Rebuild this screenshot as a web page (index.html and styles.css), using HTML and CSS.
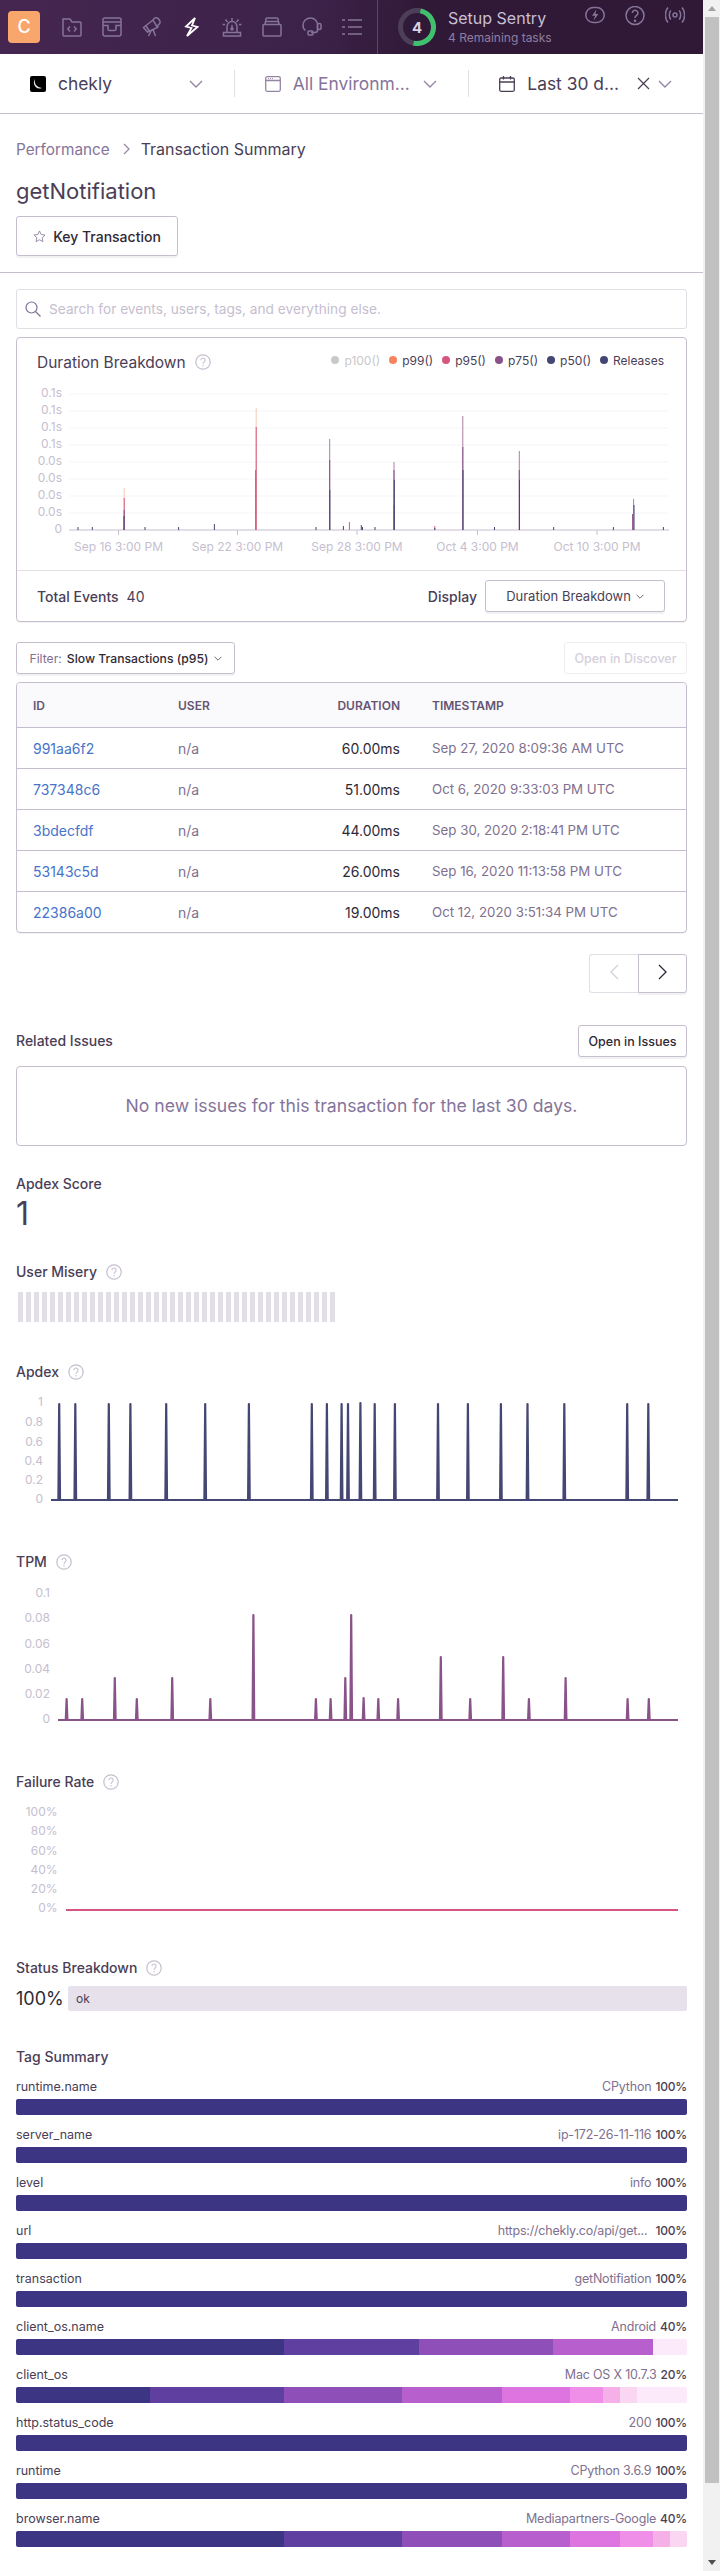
FILE: index.html
```html
<!DOCTYPE html>
<html>
<head>
  <meta charset="UTF-8">
  <title>getNotifiation - Transaction Summary</title>
  <link rel="stylesheet" href="styles.css">
</head>
<body>
  <svg class="defs" width="0" height="0">
    <symbol id="help" viewBox="0 0 16 16">
      <circle cx="8" cy="8" r="7.2" fill="none" stroke="currentColor" stroke-width="1.2"/>
      <path d="M5.9 6.2a2.1 2.1 0 1 1 3.3 1.7c-.8.6-1.2 1-1.2 2" fill="none" stroke="currentColor" stroke-width="1.1"/>
      <circle cx="8" cy="11.8" r=".7" fill="currentColor"/>
    </symbol>
    <symbol id="chevron" viewBox="0 0 14 8">
      <path d="M1 1l6 6 6-6" fill="none" stroke="currentColor" stroke-width="1.4"/>
    </symbol>
  </svg>

  <div class="page">
    <nav class="topnav">
      <div class="org-avatar">C</div>
      <svg class="nav-icon" viewBox="0 0 20 20"><path d="M1 2h7l2 3h8a1 1 0 0 1 1 1v12a1 1 0 0 1-1 1H2a1 1 0 0 1-1-1V2z"/><path d="M8 9.5L5.8 12 8 14.500M12 9.500l2.200 2.500-2.200 2.500"/></svg>
      <svg class="nav-icon" viewBox="0 0 20 20"><rect x="1" y="1" width="18" height="18" rx="2"/><path d="M1 5h18M1 8.500h5V12q0 1.500 1.500 1.500h5Q14 13.500 14 12V8.500h5"/></svg>
      <svg class="nav-icon" viewBox="0 0 20 20"><path d="M1.500 10.500L11 3l4.500 7.500-10 4.500zM4 9l3 4.500M11 3a3.200 3.200 0 0 1 5-1.500c2.500 1.500 3 5 .2 6.500l-.7 2.500M9.500 13l-3 6M11 12.500l2.500 6.500"/></svg>
      <svg class="nav-icon bolt" viewBox="0 0 20 20"><path d="M13 1L4 9.500l5.500 1.500L5 19l10.500-9-5.500-1.500z"/></svg>
      <svg class="nav-icon" viewBox="0 0 20 20"><path d="M5 15V9.500a5 5 0 0 1 10 0V15M1.500 15.500h17V19h-17zM10 1v3M3.500 2.500l2 2.500M16.500 2.500l-2 2.500M.5 7.500h2.500M17 7.500h2.500M10 8v3"/><circle cx="10" cy="12" r="1"/></svg>
      <svg class="nav-icon" viewBox="0 0 20 20"><path d="M1 8.500a1 1 0 0 1 1-1h16a1 1 0 0 1 1 1V18a1 1 0 0 1-1 1H2a1 1 0 0 1-1-1zM3 7.500L4 2a1 1 0 0 1 1-1h10a1 1 0 0 1 1 1l1 5.500M3.500 4.500h13"/></svg>
      <svg class="nav-icon" viewBox="0 0 20 20"><path d="M3.500 13.500C2 12.500 1 11 1 8.500 1 4 4.500 1 8.500 1s7 3 7 7v5c0 1.500-1 2.500-2.500 2.500H9"/><rect x="6" y="14" width="5" height="4" rx="1"/><rect x="15.500" y="6.500" width="3.500" height="6" rx="1.500"/></svg>
      <svg class="nav-icon list" viewBox="0 0 20 20"><path d="M0 3h3M6 3h14M0 10h3M6 10h14M0 17h3M6 17h14"/></svg>

      <div class="setup">
        <svg class="ring" viewBox="0 0 38 38">
          <circle cx="19" cy="19" r="16.500" fill="none" stroke="#4d3f58" stroke-width="5"/>
          <path d="M19 2.500a16.500 16.500 0 0 1 0 33" fill="none" stroke="#3fc16d" stroke-width="5" transform="rotate(12 19 19)"/>
          <text x="19" y="24.500" text-anchor="middle" class="ring-count">4</text>
        </svg>
        <div class="setup-text">
          <div class="setup-title">Setup Sentry</div>
          <div class="setup-sub">4 Remaining tasks</div>
        </div>
      </div>

      <div class="nav-right">
        <svg class="nav-icon" viewBox="0 0 20 20"><rect x=".8" y="1.500" width="18.400" height="15" rx="7.500"/><path d="M11.500 3.500L7 9.800h3l-1.500 4.700 5-6.500h-3z" fill="currentColor" stroke="none"/></svg>
        <svg class="nav-icon" viewBox="0 0 20 20"><circle cx="10" cy="9.500" r="9"/><path d="M7.300 7a2.800 2.800 0 1 1 4.300 2.400c-1 .7-1.600 1.300-1.600 2.600"/><circle cx="10" cy="14.800" r=".6"/></svg>
        <svg class="nav-icon" viewBox="0 0 20 20"><circle cx="10" cy="9" r="2"/><path d="M5.800 4.500c-2 2.300-2 6.700 0 9M14.200 4.500c2 2.300 2 6.700 0 9M3 1.500c-3.500 4-3.500 11 0 15M17 1.500c3.500 4 3.500 11 0 15"/></svg>
      </div>
    </nav>

    <div class="global-bar">
      <div class="selector">
        <svg class="project-icon" viewBox="0 0 16 16">
          <rect width="16" height="16" rx="2" fill="#000"/>
          <path d="M5 3c-1 4 1 8 7 9-4 1.500-7-.5-8-4-.3-2 0-4 1-5z" fill="#e6e6e6"/>
        </svg>
        <span class="selector-name name-dark">chekly</span>
        <svg class="chevron"><use href="#chevron"/></svg>
      </div>
      <div class="selector">
        <svg class="bar-icon" viewBox="0 0 16 16"><rect x=".7" y=".7" width="14.600" height="14.600" rx="1.500"/><path d="M.7 4.500h14.600M3 2.600h.8M5 2.600h.8M7 2.600h.8"/></svg>
        <span class="selector-name name-muted">All Environm...</span>
        <svg class="chevron"><use href="#chevron"/></svg>
      </div>
      <div class="selector">
        <svg class="bar-icon cal" viewBox="0 0 16 16"><rect x=".7" y="2" width="14.600" height="13.300" rx="1.500"/><path d="M.7 6h14.600M4.500 0v3.500M11.500 0v3.500"/></svg>
        <span class="selector-name name-dark">Last 30 d...</span>
        <svg class="close" viewBox="0 0 13 13"><path d="M1 1l11 11M12 1L1 12"/></svg>
        <svg class="chevron"><use href="#chevron"/></svg>
      </div>
    </div>

    <header class="page-head">
      <div class="crumbs">
        <span class="crumb-link">Performance</span>
        <svg class="crumb-sep" viewBox="0 0 7 12"><path d="M1 1l5 5-5 5"/></svg>
        <span>Transaction Summary</span>
      </div>
      <h1 class="page-title">getNotifiation</h1>
      <button class="btn btn-key">
        <svg class="star" viewBox="0 0 14 14"><path d="M7 1l1.800 3.900 4.200.5-3.100 2.900.8 4.200L7 10.500l-3.700 2 .8-4.200L1 5.400l4.200-.5z"/></svg>
        Key Transaction
      </button>
    </header>

    <main class="content">
      <div class="search">
        <svg class="search-icon" viewBox="0 0 16 16"><circle cx="6.500" cy="6.500" r="5.500"/><path d="M10.500 10.500l5 5"/></svg>
        <span>Search for events, users, tags, and everything else.</span>
      </div>

      <section class="panel">
        <div class="panel-head">
          <span class="panel-title">Duration Breakdown</span>
          <svg class="help panel-help"><use href="#help"/></svg>
          <ul class="legend">
            <li class="legend-off"><i class="dot dot-grey"></i>p100()</li>
            <li><i class="dot dot-orange"></i>p99()</li>
            <li><i class="dot dot-pink"></i>p95()</li>
            <li><i class="dot dot-purple"></i>p75()</li>
            <li><i class="dot dot-navy"></i>p50()</li>
            <li><i class="dot dot-navy"></i>Releases</li>
          </ul>
        </div>
        <svg class="chart chart-duration" viewBox="17 380 669 190">
          <path class="grid" d="M69 394H668M69 411H668M69 428H668M69 445H668M69 462H668M69 479H668M69 496H668M69 513H668"/>
          <path class="axis" d="M69 530H669M118.500 530v5M237.500 530v5M357 530v5M477.500 530v5M597 530v5"/>
          <g class="axis-y">
            <text x="62" y="397">0.1s</text>
            <text x="62" y="414">0.1s</text>
            <text x="62" y="431">0.1s</text>
            <text x="62" y="448">0.1s</text>
            <text x="62" y="465">0.0s</text>
            <text x="62" y="482">0.0s</text>
            <text x="62" y="499">0.0s</text>
            <text x="62" y="516">0.0s</text>
            <text x="62" y="533">0</text>
          </g>
          <g class="axis-x">
            <text x="118.500" y="551">Sep 16 3:00 PM</text>
            <text x="237.500" y="551">Sep 22 3:00 PM</text>
            <text x="357" y="551">Sep 28 3:00 PM</text>
            <text x="477.500" y="551">Oct 4 3:00 PM</text>
            <text x="597" y="551">Oct 10 3:00 PM</text>
          </g>
          <path class="bar-peach" d="M124.200 488V530M256.200 408V530"/>
          <path class="bar-pink" d="M124.200 498V530M256.200 427V530M255.600 470V530M349.400 522V530M434.800 526V530"/>
          <path class="bar-mauve" d="M329.700 439V530M462.800 416V530M519.300 451V530M394 462V530M633.600 499V530"/>
          <path class="bar-purple" d="M124.200 510V530M329.700 460V530M462.800 447V530M394 470V530M519.300 470V530M632.600 514V530M394 505V530"/>
          <path class="bar-navy" d="M78 527V530M92.300 527V530M124 516V530M145 527V530M178.600 527V530M214.400 524V530M316 527V530M329.800 490V530M343.400 526V530M361.300 525V530M362.500 527V530M375 527V530M394.300 480V530M434.800 528V530M463 470V530M494.500 527V530M519.500 480V530M553.700 527V530M613.400 527V530M634 505V530M663.400 527V530"/>
        </svg>
        <div class="panel-foot">
          <span class="foot-label">Total Events</span>
          <span class="foot-value">40</span>
          <span class="foot-label foot-display">Display</span>
          <button class="btn btn-display">Duration Breakdown <svg class="mini-chevron"><use href="#chevron"/></svg></button>
        </div>
      </section>

      <div class="table-actions">
        <button class="btn btn-filter"><span class="filter-label">Filter:</span> Slow Transactions (p95) <svg class="mini-chevron"><use href="#chevron"/></svg></button>
        <button class="btn btn-disabled">Open in Discover</button>
      </div>

      <table class="events">
        <colgroup><col class="col-id"><col class="col-user"><col class="col-duration"><col></colgroup>
        <thead>
          <tr><th>ID</th><th>User</th><th class="num">Duration</th><th>Timestamp</th></tr>
        </thead>
        <tbody>
          <tr><td class="link">991aa6f2</td><td class="muted">n/a</td><td class="num">60.00ms</td><td class="stamp">Sep 27, 2020 8:09:36 AM UTC</td></tr>
          <tr><td class="link">737348c6</td><td class="muted">n/a</td><td class="num">51.00ms</td><td class="stamp">Oct 6, 2020 9:33:03 PM UTC</td></tr>
          <tr><td class="link">3bdecfdf</td><td class="muted">n/a</td><td class="num">44.00ms</td><td class="stamp">Sep 30, 2020 2:18:41 PM UTC</td></tr>
          <tr><td class="link">53143c5d</td><td class="muted">n/a</td><td class="num">26.00ms</td><td class="stamp">Sep 16, 2020 11:13:58 PM UTC</td></tr>
          <tr><td class="link">22386a00</td><td class="muted">n/a</td><td class="num">19.00ms</td><td class="stamp">Oct 12, 2020 3:51:34 PM UTC</td></tr>
        </tbody>
      </table>

      <div class="pager">
        <button class="pager-btn pager-off"><svg viewBox="0 0 9 16"><path d="M8 1L1 8l7 7"/></svg></button>
        <button class="pager-btn"><svg viewBox="0 0 9 16"><path d="M1 1l7 7-7 7"/></svg></button>
      </div>

      <div class="related-head">
        <h3 class="section-title">Related Issues</h3>
        <button class="btn btn-issues">Open in Issues</button>
      </div>
      <div class="empty-box">No new issues for this transaction for the last 30 days.</div>

      <h3 class="section-title apdex-title">Apdex Score</h3>
      <div class="big-number">1</div>

      <h3 class="section-title misery-title">User Misery <svg class="help"><use href="#help"/></svg></h3>
      <div class="misery-bars"></div>

      <h3 class="section-title apdex-chart-title">Apdex <svg class="help"><use href="#help"/></svg></h3>
      <svg class="chart chart-apdex" viewBox="16 1390 671 120">
        <g class="axis-y">
          <text x="43" y="1406">1</text>
          <text x="43" y="1426">0.8</text>
          <text x="43" y="1446">0.6</text>
          <text x="43" y="1465">0.4</text>
          <text x="43" y="1484">0.2</text>
          <text x="43" y="1503">0</text>
        </g>
        <path class="line-navy" d="M51 1500H58.400l.8-96 .8 96H74.500l.8-96 .8 96H108l.8-96 .8 96H129.600l.8-96 .8 96H165.400l.8-96 .8 96H204.400l.8-96 .8 96H248.100l.8-96 .8 96H311l.8-96 .8 96H326.100l.8-96 .8 96H340.800l.8-96 .8 96H347.200l.8-96 .8 96H359.600l.8-97 .8 97H373.900l.8-96 .8 96H394.100l.8-96 .8 96H437.200l.8-96 .8 96H467.100l.8-96 .8 96H500.100l.8-96 .8 96H526.700l.8-96 .8 96H563.500l.8-96 .8 96H626.400l.8-96 .8 96H647.500l.8-96 .8 96H678"/>
      </svg>

      <h3 class="section-title chart-title">TPM <svg class="help"><use href="#help"/></svg></h3>
      <svg class="chart chart-tpm" viewBox="16 1580 671 150">
        <g class="axis-y">
          <text x="50" y="1597">0.1</text>
          <text x="50" y="1622">0.08</text>
          <text x="50" y="1648">0.06</text>
          <text x="50" y="1673">0.04</text>
          <text x="50" y="1698">0.02</text>
          <text x="50" y="1723">0</text>
        </g>
        <path class="line-purple" d="M58 1720H65.800l.8-21 .8 21H81.400l.8-21 .8 21H114l.8-42 .8 42H136l.8-21 .8 21H171.400l.8-42 .8 42H209.500l.8-21 .8 21H252.600l.8-105 .8 105H315.100l.8-21 .8 21H329.800l.8-21 .8 21H344.500l.8-42 .8 42H350.400l.8-105 .8 105H362.800l.8-22 .8 22H377.500l.8-21 .8 21H397.300l.8-21 .8 21H440l.8-63 .8 63H469.400l.8-21 .8 21H502.400l.8-63 .8 63H528.100l.8-21 .8 21H564.800l.8-42 .8 42H626.800l.8-21 .8 21H648l.8-21 .8 21H678"/>
      </svg>

      <h3 class="section-title chart-title">Failure Rate <svg class="help"><use href="#help"/></svg></h3>
      <svg class="chart chart-failure" viewBox="16 1800 671 120">
        <g class="axis-y">
          <text x="57.500" y="1816">100%</text>
          <text x="57.500" y="1835">80%</text>
          <text x="57.500" y="1855">60%</text>
          <text x="57.500" y="1874">40%</text>
          <text x="57.500" y="1893">20%</text>
          <text x="57.500" y="1912">0%</text>
        </g>
        <path class="line-pink" d="M66 1910H678"/>
      </svg>

      <h3 class="section-title status-title">Status Breakdown <svg class="help"><use href="#help"/></svg></h3>
      <div class="status-row">
        <span class="status-pct">100%</span>
        <div class="status-bar">ok</div>
      </div>

      <h3 class="section-title tags-title">Tag Summary</h3>
      <div class="tag">
        <div class="tag-head"><span class="tag-name">runtime.name</span><span class="tag-value">CPython</span><span class="tag-pct">100%</span></div>
        <div class="tag-bar"><i class="seg seg-1 seg-full"></i></div>
      </div>
      <div class="tag">
        <div class="tag-head"><span class="tag-name">server_name</span><span class="tag-value">ip-172-26-11-116</span><span class="tag-pct">100%</span></div>
        <div class="tag-bar"><i class="seg seg-1 seg-full"></i></div>
      </div>
      <div class="tag">
        <div class="tag-head"><span class="tag-name">level</span><span class="tag-value">info</span><span class="tag-pct">100%</span></div>
        <div class="tag-bar"><i class="seg seg-1 seg-full"></i></div>
      </div>
      <div class="tag">
        <div class="tag-head"><span class="tag-name">url</span><span class="tag-value tag-url">https://chekly.co/api/get...</span><span class="tag-pct">100%</span></div>
        <div class="tag-bar"><i class="seg seg-1 seg-full"></i></div>
      </div>
      <div class="tag">
        <div class="tag-head"><span class="tag-name">transaction</span><span class="tag-value">getNotifiation</span><span class="tag-pct">100%</span></div>
        <div class="tag-bar"><i class="seg seg-1 seg-full"></i></div>
      </div>
      <div class="tag">
        <div class="tag-head"><span class="tag-name">client_os.name</span><span class="tag-value">Android</span><span class="tag-pct">40%</span></div>
        <div class="tag-bar">
          <i class="seg seg-1" style="width:40%"></i><i class="seg seg-2" style="width:20%"></i><i class="seg seg-3" style="width:20%"></i><i class="seg seg-4" style="width:15%"></i><i class="seg seg-9" style="width:5%"></i>
        </div>
      </div>
      <div class="tag">
        <div class="tag-head"><span class="tag-name">client_os</span><span class="tag-value">Mac OS X 10.7.3</span><span class="tag-pct">20%</span></div>
        <div class="tag-bar">
          <i class="seg seg-1" style="width:20%"></i><i class="seg seg-2" style="width:20%"></i><i class="seg seg-3" style="width:17.500%"></i><i class="seg seg-4" style="width:15%"></i><i class="seg seg-5" style="width:10%"></i><i class="seg seg-6" style="width:5%"></i><i class="seg seg-7" style="width:2.500%"></i><i class="seg seg-8" style="width:2.500%"></i><i class="seg seg-9" style="width:7.500%"></i>
        </div>
      </div>
      <div class="tag">
        <div class="tag-head"><span class="tag-name">http.status_code</span><span class="tag-value">200</span><span class="tag-pct">100%</span></div>
        <div class="tag-bar"><i class="seg seg-1 seg-full"></i></div>
      </div>
      <div class="tag">
        <div class="tag-head"><span class="tag-name">runtime</span><span class="tag-value">CPython 3.6.9</span><span class="tag-pct">100%</span></div>
        <div class="tag-bar"><i class="seg seg-1 seg-full"></i></div>
      </div>
      <div class="tag">
        <div class="tag-head"><span class="tag-name">browser.name</span><span class="tag-value">Mediapartners-Google</span><span class="tag-pct">40%</span></div>
        <div class="tag-bar">
          <i class="seg seg-1" style="width:40%"></i><i class="seg seg-2" style="width:17.500%"></i><i class="seg seg-3" style="width:15%"></i><i class="seg seg-4" style="width:10%"></i><i class="seg seg-5" style="width:7.500%"></i><i class="seg seg-6" style="width:5%"></i><i class="seg seg-7" style="width:2.500%"></i><i class="seg seg-8" style="width:2.500%"></i>
        </div>
      </div>
    </main>
  </div>

  <div class="scrollbar">
    <div class="scroll-arrow scroll-up"></div>
    <div class="scroll-thumb"></div>
    <div class="scroll-arrow scroll-down"></div>
  </div>
</body>
</html>
```
FILE: styles.css
```css
/* Base */
html, body {
  margin: 0;
  height: 2571px;
  overflow: hidden;
}

body {
  display: flex;
  background: #fff;
  font-family: Inter, "Liberation Sans", sans-serif;
  font-size: 14px;
  color: #4a3e56;
}

.defs {
  position: absolute;
}

.page {
  width: 703px;
  flex: none;
}

button {
  font-family: inherit;
}

/* Top nav */
.topnav {
  display: flex;
  align-items: center;
  height: 54px;
  padding-left: 8px;
  background: linear-gradient(100deg, #452650 0%, #3c2248 45%, #2f1937 60%);
  color: #85749a;
}

.org-avatar {
  width: 32px;
  height: 32px;
  margin-right: 22px;
  border-radius: 4px;
  background: #f9a66d;
  color: #fff;
  font-size: 18px;
  font-weight: 500;
  line-height: 32px;
  text-align: center;
}

.nav-icon {
  width: 20px;
  height: 20px;
  flex: none;
  margin-right: 20px;
  fill: none;
  stroke: currentColor;
  stroke-width: 1.500;
}

.bolt {
  color: #fff;
  stroke-width: 1.800;
}

.setup {
  display: flex;
  align-items: center;
  align-self: stretch;
  margin-left: -5px;
  padding-left: 20px;
  border-left: 1px solid #5a4868;
  white-space: nowrap;
}

.ring {
  width: 38px;
  height: 38px;
  margin-right: 12px;
}

.ring-count {
  fill: #d9d0e0;
  font-size: 15px;
  font-weight: 700;
}

.setup-title {
  color: #c9bfd3;
  font-size: 16px;
  line-height: 21px;
}

.setup-sub {
  color: #8f7ea0;
  font-size: 12px;
  line-height: 17px;
}

.nav-right {
  display: flex;
  margin: -22px 0 0 auto;
}

.nav-right .nav-icon:last-child {
  margin-right: 18px;
}

/* Project / env / date bar */
.global-bar {
  display: flex;
  height: 59px;
  border-bottom: 1px solid #c6becf;
  align-items: center;
}

.selector {
  flex: 1 1 0;
  display: flex;
  align-items: center;
  height: 27px;
  padding: 0 16px 0 30px;
  border-left: 1px solid #e2dee6;
}

.selector:first-child {
  border-left: none;
}

.project-icon,
.bar-icon {
  width: 16px;
  height: 16px;
  flex: none;
  margin-right: 12px;
}

.bar-icon {
  fill: none;
  stroke: #9585a3;
  stroke-width: 1.300;
}

.cal {
  stroke: #4a3e56;
}

.selector-name {
  flex: 1;
  font-size: 17.400px;
  white-space: nowrap;
}

.name-dark {
  color: #4a3e56;
}

.name-muted {
  color: #85749a;
}

.chevron {
  width: 14px;
  height: 8px;
  flex: none;
  margin-right: 15px;
  color: #9585a3;
}

.close {
  width: 13px;
  height: 13px;
  margin-right: 8px;
  fill: none;
  stroke: #4a3e56;
  stroke-width: 1.200;
}

/* Page header */
.page-head {
  padding: 25px 16px 16px;
  border-bottom: 1px solid #c6becf;
}

.crumbs {
  display: flex;
  align-items: center;
  height: 20px;
  font-size: 16px;
  color: #4a3e56;
}

.crumb-link {
  color: #85749a;
  font-size: 15.300px;
}

.crumb-sep {
  width: 7px;
  height: 12px;
  margin: 0 11px 0 13px;
  fill: none;
  stroke: #9585a3;
  stroke-width: 1.200;
}

.page-title {
  margin: 16px 0 9px;
  font-size: 22px;
  font-weight: 400;
  line-height: 32px;
  color: #4a3e56;
}

/* Buttons */
.btn {
  display: inline-flex;
  align-items: center;
  justify-content: center;
  border: 1px solid #c6becf;
  border-radius: 3px;
  background: #fff;
  box-shadow: 0 2px 0 rgba(37, 11, 54, 0.06);
  color: #2f2936;
  font-size: 13px;
  font-weight: 500;
  padding: 0;
}

.btn-key {
  width: 162px;
  height: 40px;
  gap: 7px;
  font-size: 14px;
}

.star {
  width: 13px;
  height: 13px;
  fill: none;
  stroke: #9585a3;
}

.btn-display {
  width: 180px;
  height: 32px;
  font-weight: 400;
  color: #4a3e56;
  margin-left: 8px;
  gap: 5px;
}

.btn-filter {
  width: 219px;
  height: 32px;
  gap: 5px;
  font-size: 12.200px;
}

.filter-label {
  color: #80708f;
  font-weight: 400;
}

.btn-disabled {
  width: 123px;
  height: 32px;
  border-color: #eeebf1;
  box-shadow: none;
  color: #d5cfdc;
  font-size: 12.500px;
}

.btn-issues {
  width: 109px;
  height: 32px;
  font-size: 12.500px;
}

.mini-chevron {
  width: 8px;
  height: 5px;
  color: #4a3e56;
}

/* Search */
.content {
  padding: 16px 16px 0;
}

.search {
  display: flex;
  align-items: center;
  height: 40px;
  box-sizing: border-box;
  padding-left: 8px;
  border: 1px solid #e2dee6;
  border-radius: 3px;
  color: #c6becf;
  font-size: 13.700px;
}

.search-icon {
  width: 16px;
  height: 16px;
  margin-right: 8px;
  fill: none;
  stroke: #80708f;
  stroke-width: 1.200;
}

/* Duration panel */
.panel {
  margin-top: 8px;
  border: 1px solid #c6becf;
  border-radius: 4px;
  box-shadow: 0 1px 0 rgba(37, 11, 54, 0.06);
}

.panel-head {
  display: flex;
  align-items: center;
  height: 42px;
  padding: 6px 22px 0 20px;
  box-sizing: border-box;
}

.panel-title {
  font-size: 15.500px;
  color: #4a3e56;
}

.help {
  width: 16px;
  height: 16px;
  color: #c6becf;
  vertical-align: -3px;
  margin-left: 5px;
}

.panel-help {
  margin-left: 9px;
}

.legend {
  display: flex;
  margin: -4px 0 0 auto;
  padding: 0;
  list-style: none;
  font-size: 12px;
  color: #4a3e56;
  gap: 9px;
}

.legend li {
  display: flex;
  align-items: center;
  gap: 5px;
}

.legend-off {
  color: #c9c9c9;
}

.dot {
  width: 8px;
  height: 8px;
  border-radius: 50%;
}

.dot-grey { background: #c9c9c9; }
.dot-orange { background: #f4845f; }
.dot-pink { background: #d6567f; }
.dot-purple { background: #895289; }
.dot-navy { background: #444674; }

.chart {
  display: block;
}

.chart-duration {
  width: 669px;
  height: 190px;
}

.chart-apdex,
.chart-failure {
  width: 671px;
  height: 120px;
  margin-top: 8px;
}

.chart-tpm {
  width: 671px;
  height: 150px;
  margin-top: 8px;
}

.chart text {
  font-family: Inter, "Liberation Sans", sans-serif;
  font-size: 12px;
  fill: #c6becf;
}

.axis-y text {
  text-anchor: end;
}

.axis-x text {
  text-anchor: middle;
}

.grid {
  fill: none;
  stroke: #f5f3f7;
}

.axis {
  fill: none;
  stroke: #c6becf;
}

.bar-peach,
.bar-pink,
.bar-mauve,
.bar-purple,
.bar-navy {
  fill: none;
  stroke-width: 1;
}

.bar-peach { stroke: #f5c8b4; }
.bar-pink { stroke: #d6567f; }
.bar-mauve { stroke: #ab7ea4; }
.bar-purple { stroke: #895289; }
.bar-navy { stroke: #444674; }

.line-navy,
.line-purple,
.line-pink {
  fill: none;
  stroke-width: 2.200;
  stroke-linejoin: round;
}

.line-navy { stroke: #444674; }
.line-purple { stroke: #895289; }
.line-pink { stroke: #d6567f; }

.panel-foot {
  display: flex;
  align-items: center;
  height: 51px;
  box-sizing: border-box;
  padding: 0 21px 0 20px;
  border-top: 1px solid #e2dee6;
}

.foot-label {
  font-size: 14px;
  font-weight: 500;
  color: #4a3e56;
}

.foot-value {
  margin-left: 8px;
  color: #4a3e56;
}

.foot-display {
  margin-left: auto;
}

/* Events table */
.table-actions {
  display: flex;
  justify-content: space-between;
  margin-top: 20px;
}

.events {
  width: 671px;
  margin-top: 8px;
  table-layout: fixed;
  border-collapse: separate;
  border-spacing: 0;
  border: 1px solid #c6becf;
  border-radius: 4px;
  box-shadow: 0 1px 0 rgba(37, 11, 54, 0.06);
}

.col-id { width: 145px; }
.col-user { width: 145px; }
.col-duration { width: 109px; }

.events th {
  height: 44px;
  padding: 0 16px;
  background: #faf9fb;
  border-bottom: 1px solid #c6becf;
  color: #645574;
  font-size: 12px;
  font-weight: 600;
  text-align: left;
  text-transform: uppercase;
}

.events th:first-child {
  border-top-left-radius: 4px;
}

.events th:last-child {
  border-top-right-radius: 4px;
}

.events td {
  height: 40px;
  padding: 0 16px;
  border-bottom: 1px solid #c6becf;
  color: #2f2936;
  font-size: 14px;
  white-space: nowrap;
}

.events tr:last-child td {
  border-bottom: none;
}

.events th.num,
.events td.num {
  text-align: right;
}

.events .link {
  color: #4674ca;
}

.events .muted {
  color: #80708f;
}

.events .stamp {
  color: #80708f;
  font-size: 13.300px;
}

.pager {
  display: flex;
  justify-content: flex-end;
  margin-top: 21px;
}

.pager-btn {
  width: 49px;
  height: 39px;
  padding: 0;
  background: #fff;
  border: 1px solid #c6becf;
  border-radius: 0 3px 3px 0;
  box-shadow: 0 2px 0 rgba(37, 11, 54, 0.06);
  color: #2f2936;
}

.pager-btn svg {
  width: 9px;
  height: 16px;
  fill: none;
  stroke: currentColor;
  stroke-width: 1.300;
}

.pager-off {
  border-color: #e2dee6;
  border-right: none;
  border-radius: 3px 0 0 3px;
  box-shadow: none;
  color: #d5cfdc;
}

/* Sections */
.related-head {
  display: flex;
  justify-content: space-between;
  align-items: center;
  margin-top: 32px;
}

.section-title {
  margin: 0;
  font-size: 14px;
  font-weight: 500;
  line-height: 20px;
  height: 20px;
  color: #4a3e56;
}

.empty-box {
  height: 80px;
  box-sizing: border-box;
  margin-top: 9px;
  border: 1px solid #c6becf;
  border-radius: 4px;
  color: #85749a;
  font-size: 17.600px;
  line-height: 78px;
  text-align: center;
}

.apdex-title {
  margin-top: 28px;
}

.big-number {
  margin-top: 2px;
  font-size: 32px;
  line-height: 36px;
}

.misery-title {
  margin-top: 30px;
}

.misery-bars {
  width: 317px;
  height: 30px;
  margin: 10px 0 0 1.500px;
  background: repeating-linear-gradient(90deg, #e2dee6 0, #e2dee6 5px, transparent 5px, transparent 8px);
}

.apdex-chart-title {
  margin-top: 40px;
}

.chart-title {
  margin-top: 42px;
}

.status-title {
  margin-top: 38px;
}

.status-row {
  display: flex;
  align-items: center;
  margin-top: 8px;
}

.status-pct {
  width: 52px;
  font-size: 18px;
  color: #2f2936;
}

.status-bar {
  flex: 1;
  height: 25px;
  padding-left: 8px;
  border-radius: 2px;
  background: #e7e1ec;
  font-size: 12px;
  line-height: 25px;
  color: #4a3e56;
}

/* Tag summary */
.tags-title {
  margin-top: 36px;
}

.tag {
  margin-top: 10px;
}

.tag-head {
  display: flex;
  height: 20px;
  line-height: 20px;
  font-size: 12.500px;
}

.tag-name {
  flex: 1;
  color: #4a3e56;
}

.tag-value {
  color: #80708f;
  font-size: 12.500px;
  letter-spacing: -0.2px;
}

.tag-url {
  margin-right: 4px;
}

.tag-pct {
  margin-left: 4px;
  font-size: 12px;
  font-weight: 500;
  letter-spacing: -0.2px;
  color: #4a3e56;
}

.tag-bar {
  display: flex;
  height: 16px;
  margin-top: 2px;
  border-radius: 2px;
  overflow: hidden;
}

.seg { display: block; }
.seg-full { width: 100%; }
.seg-1 { background: #3c3584; }
.seg-2 { background: #5f3fa0; }
.seg-3 { background: #8e4fb9; }
.seg-4 { background: #b85fce; }
.seg-5 { background: #dd74e0; }
.seg-6 { background: #f08fe8; }
.seg-7 { background: #f6b0e8; }
.seg-8 { background: #fbd6f3; }
.seg-9 { background: #fce9f9; }

/* Window scrollbar */
.scrollbar {
  width: 17px;
  height: 2571px;
  flex: none;
  display: flex;
  flex-direction: column;
  background: #f1f1f1;
}

.scroll-arrow {
  width: 0;
  height: 0;
  margin: 6px auto;
  border-left: 4px solid transparent;
  border-right: 4px solid transparent;
}

.scroll-up {
  border-bottom: 5px solid #a3a3a3;
}

.scroll-down {
  margin-top: auto;
  border-top: 5px solid #505050;
}

.scroll-thumb {
  height: 2466px;
  margin: 0 1px 0 2px;
  background: #c1c1c1;
}
```
